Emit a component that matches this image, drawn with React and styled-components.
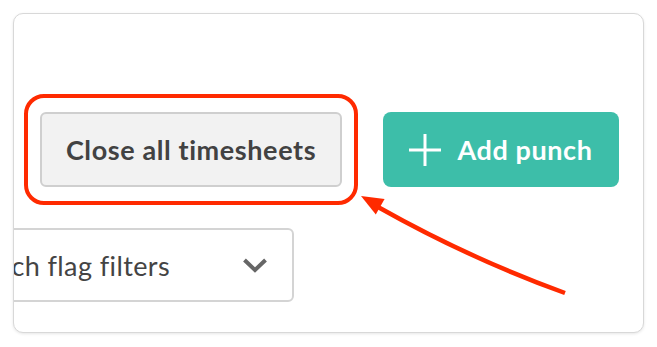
import styled, { createGlobalStyle } from 'styled-components'

const GlobalStyle = createGlobalStyle`
  html, body {
    margin: 0;
    padding: 0;
    background: #ffffff;
  }
  body {
    font-family: Lato, "Liberation Sans", sans-serif;
  }
`

export default function App() {
  return (
    <Page>
      <GlobalStyle />
      <Card>
        <ActionRow>
          <Highlight>
            <GrayButton>Close all timesheets</GrayButton>
          </Highlight>
          <PrimaryButton>
            <PlusIcon />
            Add punch
          </PrimaryButton>
        </ActionRow>
        <FilterRow>
          <Select>
            <SelectLabel>Punch flag filters</SelectLabel>
            <Chevron />
          </Select>
        </FilterRow>
      </Card>
      <ArrowOverlay />
    </Page>
  )
}

const PlusIcon = () => (
  <svg width='32' height='32' viewBox='0 0 32 32'>
    <path d='M16 0v32M0 16h32' stroke='#ffffff' strokeWidth='3' fill='none' />
  </svg>
)

const Chevron = () => (
  <svg width='26' height='16' viewBox='0 0 26 16'>
    <path d='M2.5 3l10.5 10 10.5-10' stroke='#666666' strokeWidth='4' fill='none' />
  </svg>
)

const ArrowOverlay = () => (
  <Overlay width='657' height='347' viewBox='0 0 657 347'>
    <path d='M565 293Q468.5 258 378 207' stroke='#ff2a00' strokeWidth='4.5' fill='none' />
    <polygon points='361,196 375.8,214.6 384.6,199' fill='#ff2a00' />
  </Overlay>
)

const Page = styled.div`
  position: relative;
  width: 657px;
  height: 347px;
  padding: 13px;
  box-sizing: border-box;
`

const Card = styled.div`
  width: 631px;
  height: 320px;
  box-sizing: border-box;
  border: 1px solid #d8d8d8;
  border-radius: 10px;
  box-shadow: 0 1px 3px rgba(0, 0, 0, 0.1);
  background: #ffffff;
  overflow: hidden;
  display: flex;
  flex-direction: column;
  padding-top: 98px;
`

const ActionRow = styled.div`
  display: flex;
  justify-content: flex-end;
  align-items: center;
  gap: 41px;
  padding-right: 24px;
`

const Highlight = styled.div`
  position: relative;

  &::after {
    content: '';
    position: absolute;
    top: -18px;
    bottom: -18px;
    left: -16px;
    right: -16px;
    border: 4px solid #ff2a00;
    border-radius: 20px;
    pointer-events: none;
  }
`

const Button = styled.button`
  height: 75px;
  box-sizing: border-box;
  display: flex;
  align-items: center;
  justify-content: center;
  font-family: Lato, "Liberation Sans", sans-serif;
  font-weight: 700;
  font-size: 27px;
  letter-spacing: 0.6px;
  cursor: pointer;
`

const GrayButton = styled(Button)`
  width: 302px;
  background: #f2f2f2;
  color: #424242;
  border: 2px solid #cfcfcf;
  border-radius: 6px;
`

const PrimaryButton = styled(Button)`
  width: 236px;
  gap: 16px;
  background: #3dbea9;
  color: #ffffff;
  border: none;
  border-radius: 8px;
`

const FilterRow = styled.div`
  display: flex;
  margin-top: 41px;
  margin-left: -66px;
`

const Select = styled.div`
  width: 346px;
  height: 74px;
  box-sizing: border-box;
  border: 2px solid #d4d4d4;
  border-radius: 6px;
  display: flex;
  align-items: center;
  justify-content: space-between;
  padding: 0 24px 0 14px;
`

const SelectLabel = styled.span`
  font-size: 27px;
  letter-spacing: 0.4px;
  color: #444444;
`

const Overlay = styled.svg`
  position: absolute;
  top: 0;
  left: 0;
  pointer-events: none;
`
